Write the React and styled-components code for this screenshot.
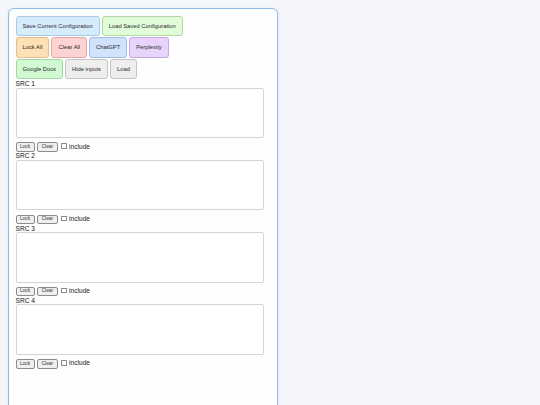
import styled, { createGlobalStyle } from "styled-components";

const GlobalStyle = createGlobalStyle`
  html, body {
    margin: 0;
    padding: 0;
    background: #f4f6fa;
    font-family: "Liberation Sans", Arial, sans-serif;
  }
  body {
    padding: 8px;
  }
`;

const Panel = styled.div`
  width: 270px;
  height: 430px;
  box-sizing: border-box;
  padding: 6.5px 6.5px;
  background: #fefefe;
  border: 1.5px solid #8cbbe3;
  border-radius: 6px;
  box-shadow: 0 1px 4px rgba(80, 120, 170, 0.12);
`;

const ButtonRow = styled.div`
  display: flex;
  gap: 2px;
  margin-bottom: 1px;
`;

const palette = {
  blue: ["#d5ecfb", "#a9cbe3"],
  green: ["#e1fcd8", "#b3d7a6"],
  orange: ["#fde1b5", "#e0bf8c"],
  pink: ["#fdd2d2", "#e2a9a9"],
  sky: ["#d1e2fc", "#a5bde0"],
  lilac: ["#e7d3fc", "#c3a9e0"],
  mint: ["#d2fad2", "#a5d5a5"],
  grey: ["#eeeeee", "#c4c4c4"],
};

const ToolButton = styled.button`
  height: 20.5px;
  padding: 0 6px;
  font-family: "Liberation Sans", Arial, sans-serif;
  font-size: 5.8px;
  color: #2a2a2a;
  background: ${({ $tone }) => palette[$tone][0]};
  border: 1px solid ${({ $tone }) => palette[$tone][1]};
  border-radius: 3px;
  cursor: pointer;
`;

const Source = styled.div`
  display: flex;
  flex-direction: column;
`;

const Label = styled.label`
  display: block;
  font-size: 6.6px;
  line-height: 7.5px;
  color: #111;
`;

const Area = styled.textarea`
  display: block;
  width: 97.3%;
  height: 50.5px;
  box-sizing: border-box;
  border: 1px solid #d4d4d4;
  border-radius: 2px;
  background: #fff;
  resize: none;
  margin: 0;
`;

const Controls = styled.div`
  display: flex;
  align-items: center;
  gap: 2.5px;
  height: 10.5px;
  margin-top: 3.8px;
`;

const SmallButton = styled.button`
  height: 9.5px;
  padding: 0 3.5px;
  font-family: "Liberation Sans", Arial, sans-serif;
  font-size: 4.8px;
  color: #333;
  background: #efefef;
  border: 1px solid #8d8d8d;
  border-radius: 2px;
  line-height: 1;
`;

const Include = styled.label`
  display: flex;
  align-items: center;
  gap: 2.5px;
  font-size: 6.6px;
  color: #222;
  margin-left: 1px;
  margin-top: -2px;
`;

const Box = styled.input`
  appearance: none;
  width: 5.5px;
  height: 5.5px;
  margin: 0;
  border: 0.8px solid #8a8a8a;
  border-radius: 0.5px;
  background: #fff;
`;

const rows = [
  [
    ["Save Current Configuration", "blue"],
    ["Load Saved Configuration", "green"],
  ],
  [
    ["Lock All", "orange"],
    ["Clear All", "pink"],
    ["ChatGPT", "sky"],
    ["Perplexity", "lilac"],
  ],
  [
    ["Google Docs", "mint"],
    ["Hide inputs", "grey"],
    ["Load", "grey"],
  ],
];

const App = () => {
  return (
    <>
      <GlobalStyle />
      <Panel>
        {rows.map((row, i) => (
          <ButtonRow key={i}>
            {row.map(([text, tone]) => (
              <ToolButton key={text} $tone={tone}>
                {text}
              </ToolButton>
            ))}
          </ButtonRow>
        ))}
        {[1, 2, 3, 4].map((n) => (
          <Source key={n}>
            <Label>SRC {n}</Label>
            <Area />
            <Controls>
              <SmallButton>Lock</SmallButton>
              <SmallButton>Clear</SmallButton>
              <Include>
                <Box type="checkbox" />
                include
              </Include>
            </Controls>
          </Source>
        ))}
      </Panel>
    </>
  );
};

export default App;
